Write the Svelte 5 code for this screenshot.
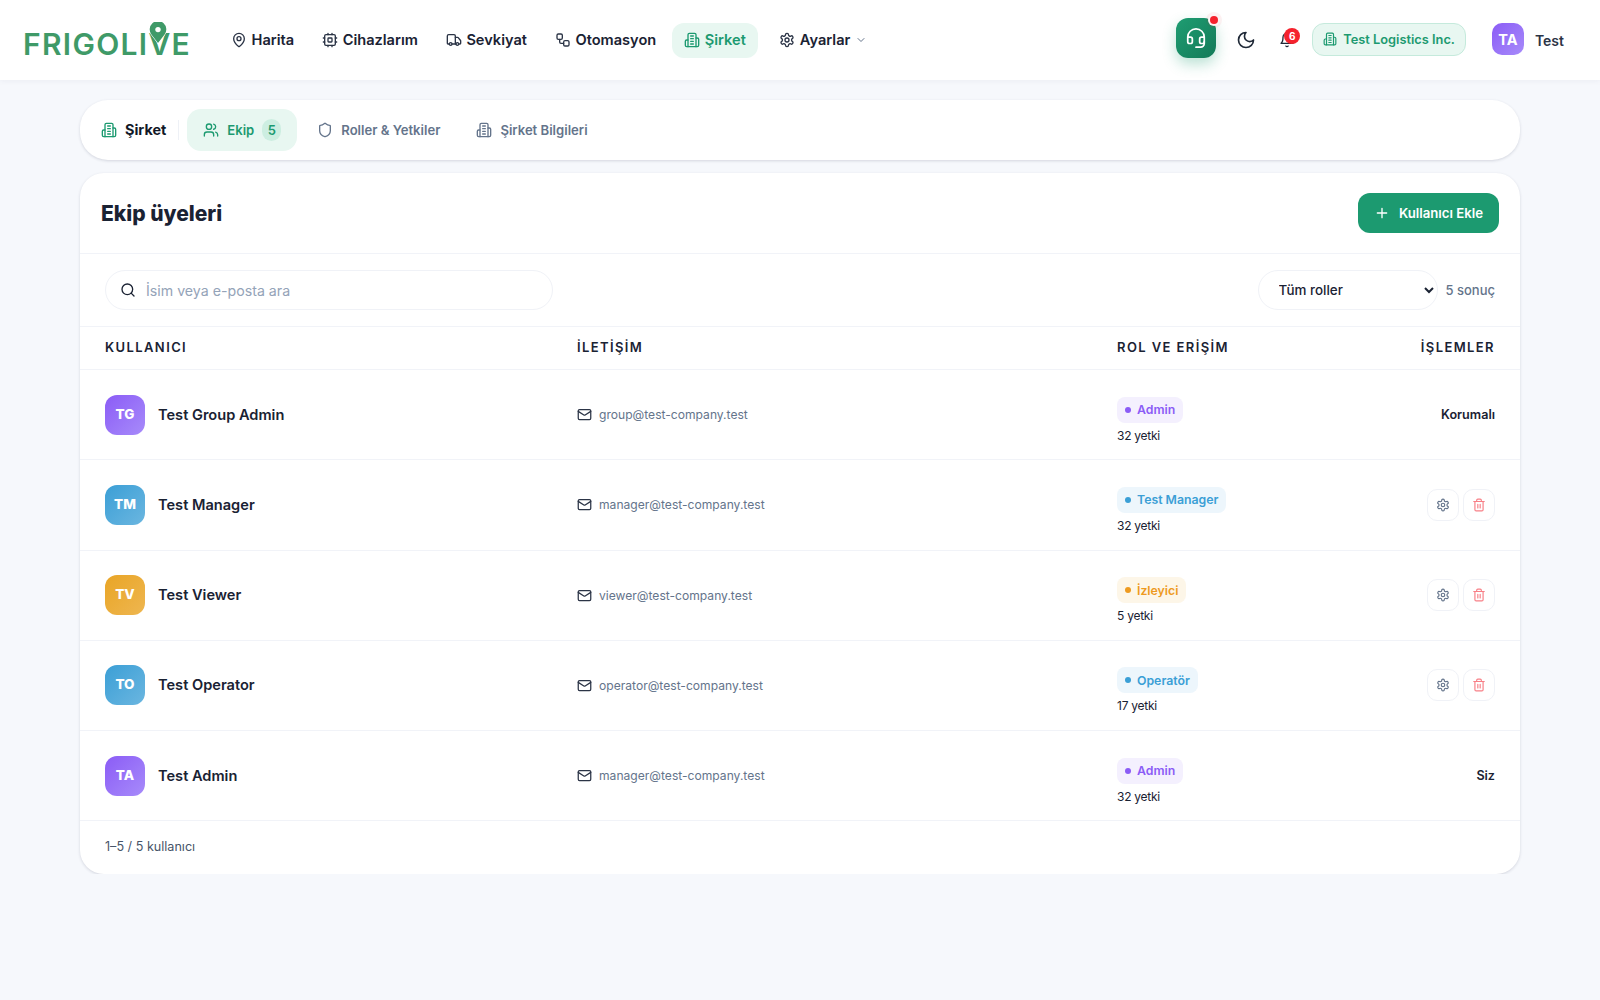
<script>
  const P = {
    pin: '<path d="M20 10c0 4.993-5.539 10.193-7.399 11.799a1 1 0 0 1-1.202 0C9.539 20.193 4 14.993 4 10a8 8 0 0 1 16 0"/><circle cx="12" cy="10" r="3"/>',
    cpu: '<rect x="4" y="4" width="16" height="16" rx="2"/><rect x="9" y="9" width="6" height="6" rx="1"/><path d="M15 2v2M15 20v2M2 15h2M2 9h2M20 15h2M20 9h2M9 2v2M9 20v2"/>',
    truck: '<path d="M14 18V6a2 2 0 0 0-2-2H4a2 2 0 0 0-2 2v11a1 1 0 0 0 1 1h2"/><path d="M15 18H9"/><path d="M19 18h2a1 1 0 0 0 1-1v-3.65a1 1 0 0 0-.22-.624l-3.48-4.35A1 1 0 0 0 17.52 8H14"/><circle cx="17" cy="18" r="2"/><circle cx="7" cy="18" r="2"/>',
    flow: '<rect width="8" height="8" x="3" y="3" rx="2"/><path d="M7 11v4a2 2 0 0 0 2 2h4"/><rect width="8" height="8" x="13" y="13" rx="2"/>',
    building: '<path d="M6 22V4a2 2 0 0 1 2-2h8a2 2 0 0 1 2 2v18Z"/><path d="M6 12H4a2 2 0 0 0-2 2v6a2 2 0 0 0 2 2h2"/><path d="M18 9h2a2 2 0 0 1 2 2v9a2 2 0 0 1-2 2h-2"/><path d="M10 6h4M10 10h4M10 14h4M10 18h4"/>',
    gear: '<path d="M12.22 2h-.44a2 2 0 0 0-2 2v.18a2 2 0 0 1-1 1.73l-.43.25a2 2 0 0 1-2 0l-.15-.08a2 2 0 0 0-2.73.73l-.22.38a2 2 0 0 0 .73 2.73l.15.1a2 2 0 0 1 1 1.72v.51a2 2 0 0 1-1 1.74l-.15.09a2 2 0 0 0-.73 2.73l.22.38a2 2 0 0 0 2.73.73l.15-.08a2 2 0 0 1 2 0l.43.25a2 2 0 0 1 1 1.73V20a2 2 0 0 0 2 2h.44a2 2 0 0 0 2-2v-.18a2 2 0 0 1 1-1.73l.43-.25a2 2 0 0 1 2 0l.15.08a2 2 0 0 0 2.73-.73l.22-.39a2 2 0 0 0-.73-2.73l-.15-.08a2 2 0 0 1-1-1.74v-.5a2 2 0 0 1 1-1.74l.15-.09a2 2 0 0 0 .73-2.73l-.22-.38a2 2 0 0 0-2.73-.73l-.15.08a2 2 0 0 1-2 0l-.43-.25a2 2 0 0 1-1-1.73V4a2 2 0 0 0-2-2z"/><circle cx="12" cy="12" r="3"/>',
    chevron: '<path d="m6 9 6 6 6-6"/>',
    headset: '<path d="M3 11h3a2 2 0 0 1 2 2v3a2 2 0 0 1-2 2H5a2 2 0 0 1-2-2v-5Zm0 0a9 9 0 1 1 18 0m0 0v5a2 2 0 0 1-2 2h-1a2 2 0 0 1-2-2v-3a2 2 0 0 1 2-2h3Z"/><path d="M21 16v2a4 4 0 0 1-4 4h-5"/>',
    moon: '<path d="M12 3a6 6 0 0 0 9 9 9 9 0 1 1-9-9Z"/>',
    bell: '<path d="M6 8a6 6 0 0 1 12 0c0 7 3 9 3 9H3s3-2 3-9"/><path d="M10.3 21a1.94 1.94 0 0 0 3.4 0"/>',
    users: '<path d="M16 21v-2a4 4 0 0 0-4-4H6a4 4 0 0 0-4 4v2"/><circle cx="9" cy="7" r="4"/><path d="M22 21v-2a4 4 0 0 0-3-3.87"/><path d="M16 3.13a4 4 0 0 1 0 7.75"/>',
    shield: '<path d="M20 13c0 5-3.5 7.5-7.66 8.95a1 1 0 0 1-.67-.01C7.5 20.5 4 18 4 13V6a1 1 0 0 1 1-1c2 0 4.5-1.2 6.24-2.72a1.17 1.17 0 0 1 1.52 0C14.51 3.81 17 5 19 5a1 1 0 0 1 1 1z"/>',
    mail: '<rect width="20" height="16" x="2" y="4" rx="2"/><path d="m22 7-8.97 5.7a1.94 1.94 0 0 1-2.06 0L2 7"/>',
    trash: '<path d="M3 6h18"/><path d="M19 6v14c0 1-1 2-2 2H7c-1 0-2-1-2-2V6"/><path d="M8 6V4c0-1 1-2 2-2h4c1 0 2 1 2 2v2"/><path d="M10 11v6M14 11v6"/>',
    search: '<circle cx="11" cy="11" r="8"/><path d="m21 21-4.3-4.3"/>',
    plus: '<path d="M5 12h14M12 5v14"/>'
  };

  const nav = [
    { label: 'Harita', icon: 'pin' },
    { label: 'Cihazlarım', icon: 'cpu' },
    { label: 'Sevkiyat', icon: 'truck' },
    { label: 'Otomasyon', icon: 'flow' },
    { label: 'Şirket', icon: 'building', active: true }
  ];

  const users = [
    { initials: 'TG', name: 'Test Group Admin', email: 'group@test-company.test', role: 'Admin', tone: 'purple', perms: 32, note: 'Korumalı' },
    { initials: 'TM', name: 'Test Manager', email: 'manager@test-company.test', role: 'Test Manager', tone: 'blue', perms: 32 },
    { initials: 'TV', name: 'Test Viewer', email: 'viewer@test-company.test', role: 'İzleyici', tone: 'orange', perms: 5 },
    { initials: 'TO', name: 'Test Operator', email: 'operator@test-company.test', role: 'Operatör', tone: 'blue', perms: 17 },
    { initials: 'TA', name: 'Test Admin', email: 'manager@test-company.test', role: 'Admin', tone: 'purple', perms: 32, note: 'Siz' }
  ];
</script>

{#snippet icon(name, size = 16, sw = 2)}
  <svg class="ic" width={size} height={size} viewBox="0 0 24 24" fill="none" stroke="currentColor" stroke-width={sw} stroke-linecap="round" stroke-linejoin="round">{@html P[name]}</svg>
{/snippet}

<header class="topbar">
  <div class="logo">
    <span class="wordmark">FRIGOLIVE</span>
    <svg class="logo-pin" width="20" height="24" viewBox="0 0 20 24">
      <path d="M10 21 L3.4 12.4 A8.3 8.3 0 1 1 16.6 12.4 Z" fill="#3f9a68" stroke="#fff" stroke-width="1.2" paint-order="stroke"/>
      <circle cx="10" cy="7.6" r="2.7" fill="#fff"/>
    </svg>
  </div>

  <nav class="nav">
    {#each nav as item}
      <span class="nav-item" class:active={item.active}>
        {@render icon(item.icon)}
        {item.label}
      </span>
    {/each}
    <span class="nav-item settings">
      {@render icon('gear')}
      Ayarlar
      <span class="chev">{@render icon('chevron', 12)}</span>
    </span>
  </nav>

  <div class="top-right">
    <button class="support">
      {@render icon('headset', 22, 1.9)}
      <span class="support-dot"></span>
    </button>
    <span class="round-btn moon">{@render icon('moon', 20)}</span>
    <span class="round-btn bell">
      {@render icon('bell', 16)}
      <span class="bell-badge">6</span>
    </span>
    <span class="company">{@render icon('building', 14)} Test Logistics Inc.</span>
    <span class="user">
      <span class="user-avatar">TA</span>
      <span class="user-name">Test</span>
    </span>
  </div>
</header>

<main class="page">
  <div class="tabs">
    <span class="tabs-label">
      <span class="green">{@render icon('building')}</span>
      Şirket
    </span>
    <span class="tabs-div"></span>
    <span class="tab active">
      {@render icon('users')}
      Ekip
      <span class="tab-count">5</span>
    </span>
    <span class="tab">{@render icon('shield')} Roller &amp; Yetkiler</span>
    <span class="tab">{@render icon('building')} Şirket Bilgileri</span>
  </div>

  <section class="card">
    <div class="card-head">
      <h1>Ekip üyeleri</h1>
      <button class="add">{@render icon('plus')} Kullanıcı Ekle</button>
    </div>

    <div class="toolbar">
      <label class="search">
        {@render icon('search')}
        <input type="text" placeholder="İsim veya e-posta ara" />
      </label>
      <div class="filter">
        <select><option>Tüm roller</option></select>
        <span class="count">5 sonuç</span>
      </div>
    </div>

    <div class="row thead">
      <span>KULLANICI</span>
      <span>İLETİŞİM</span>
      <span>ROL VE ERİŞİM</span>
      <span class="end">İŞLEMLER</span>
    </div>

    {#each users as u}
      <div class="row tr">
        <div class="who">
          <span class="avatar {u.initials}">{u.initials}</span>
          <span class="name">{u.name}</span>
        </div>
        <div class="mail">
          {@render icon('mail', 15)}
          <span>{u.email}</span>
        </div>
        <div class="role">
          <span class="badge {u.tone}"><i></i>{u.role}</span>
          <span class="perms">{u.perms} yetki</span>
        </div>
        <div class="end actions">
          {#if u.note}
            <span class="note">{u.note}</span>
          {:else}
            <button class="act">{@render icon('gear', 14)}</button>
            <button class="act del">{@render icon('trash', 14)}</button>
          {/if}
        </div>
      </div>
    {/each}

    <div class="foot">1–5 / 5 kullanıcı</div>
  </section>
</main>

<style>
  :global(body) {
    margin: 0;
    background: #f6f8fc;
    font-family: Inter, "Liberation Sans", sans-serif;
    color: #1a2233;
  }
  .ic { display: block; flex: none; }
  button { font: inherit; border: 0; padding: 0; cursor: pointer; }

  .topbar {
    height: 80px;
    box-sizing: border-box;
    background: #fff;
    display: flex;
    align-items: center;
    padding: 0 24px;
    box-shadow: 0 1px 6px rgba(30, 40, 70, 0.05);
  }
  .logo { position: relative; width: 195px; flex: none; height: 40px; display: flex; align-items: center; }
  .wordmark {
    font-size: 30px;
    font-weight: 600;
    letter-spacing: 1.3px;
    color: #3f9a68;
    line-height: 1;
    padding-top: 7px;
    margin-left: -1px;
  }
  .logo-pin { position: absolute; left: 124px; top: 2px; }

  .nav { display: flex; align-items: center; gap: 4px; }
  .nav-item {
    display: flex;
    align-items: center;
    gap: 4.5px;
    height: 35px;
    padding: 0 12px;
    border-radius: 12px;
    font-size: 14.6px;
    font-weight: 600;
    color: #1a2233;
  }
  .nav-item .ic { color: #2b3446; }
  .nav-item.active { background: #e8f7f1; color: #1c9a70; }
  .nav-item.active .ic { color: #1c9a70; }
  .settings { gap: 5px; margin-left: 5px; }
  .chev { color: #64748b; margin-left: 0; }
  .chev .ic { color: #64748b; }

  .top-right { margin-left: auto; display: flex; align-items: center; }
  .support {
    position: relative;
    width: 40px;
    height: 40px;
    margin-top: -4px;
    border-radius: 12px;
    background: linear-gradient(135deg, #1f9d72, #137a58);
    color: #fff;
    display: grid;
    place-items: center;
    box-shadow: 0 6px 14px rgba(28, 154, 112, 0.3);
  }
  .support-dot {
    position: absolute;
    top: -2px;
    right: -2px;
    width: 8px;
    height: 8px;
    border-radius: 50%;
    background: #f5222d;
    box-shadow: 0 0 0 4px rgba(245, 34, 45, 0.06), 0 0 0 2px #fff;
  }
  .round-btn { position: relative; width: 36px; height: 36px; display: grid; place-items: center; color: #1f2937; }
  .moon { margin-left: 12px; }
  .bell { margin-left: 5px; margin-right: 7px; color: #1f2937; }
  .bell-badge {
    position: absolute;
    top: 6px;
    right: 5px;
    min-width: 16px;
    height: 16px;
    border-radius: 8px;
    background: #f5222d;
    color: #fff;
    font-size: 10px;
    font-weight: 700;
    display: grid;
    place-items: center;
  }
  .company {
    display: flex;
    align-items: center;
    gap: 6px;
    height: 33px;
    margin-top: -2px;
    box-sizing: border-box;
    padding: 0 10px;
    border: 1px solid #c5eadc;
    border-radius: 12px;
    background: #e8f7f1;
    color: #1c9a70;
    font-size: 12.8px;
    font-weight: 600;
  }
  .user { display: flex; align-items: center; gap: 11px; margin-left: 26px; padding-right: 12px; }
  .user-avatar {
    width: 32px;
    height: 32px;
    margin-top: -2px;
    border-radius: 10px;
    background: linear-gradient(135deg, #8b5cf6, #a78bfa);
    color: #fff;
    font-size: 14.5px;
    font-weight: 700;
    display: grid;
    place-items: center;
  }
  .user-name { font-size: 14px; font-weight: 600; color: #2b3446; }

  .page { width: 1440px; margin: 20px auto 0; display: flex; flex-direction: column; gap: 13px; }

  .tabs {
    height: 60px;
    box-sizing: border-box;
    background: #fff;
    border-radius: 28px;
    display: flex;
    align-items: center;
    padding: 0 21px;
    box-shadow: 0 1px 3px rgba(30, 40, 70, 0.16);
  }
  .tabs-label { display: flex; align-items: center; gap: 8px; padding-bottom: 1px; font-size: 14.4px; font-weight: 700; color: #111827; }
  .green { color: #1c9a70; }
  .tabs-div { width: 1px; height: 20px; background: #eef1f6; margin: 0 8px 0 12px; }
  .tab {
    display: flex;
    align-items: center;
    gap: 8px;
    height: 42px;
    padding: 0 16px;
    margin-right: 4px;
    border-radius: 14px;
    font-size: 13.1px;
    font-weight: 600;
    color: #64748b;
  }
  .tab.active { background: #e8f7f1; color: #1c9a70; }
  .tab-count {
    width: 19px;
    height: 22px;
    border-radius: 11px;
    background: #cdeee1;
    display: grid;
    place-items: center;
    font-size: 13px;
  }

  .card {
    background: #fff;
    border-radius: 24px;
    box-shadow: 0 1px 3px rgba(30, 40, 70, 0.16);
    display: flex;
    flex-direction: column;
  }
  .card-head {
    height: 81px;
    box-sizing: border-box;
    display: flex;
    align-items: center;
    justify-content: space-between;
    padding: 0 21px;
    border-bottom: 1px solid #f1f3f8;
  }
  h1 { margin: 0; font-size: 21px; font-weight: 800; color: #1a2233; }
  .add {
    display: flex;
    align-items: center;
    gap: 9px;
    height: 40px;
    padding: 0 16px 1px;
    border-radius: 12px;
    background: #1c9a70;
    color: #fff;
    font-size: 13.2px;
    font-weight: 600;
  }

  .toolbar {
    height: 73px;
    box-sizing: border-box;
    display: flex;
    align-items: center;
    justify-content: space-between;
    padding: 0 25px;
    border-bottom: 1px solid #f1f3f8;
  }
  .search {
    width: 448px;
    height: 40px;
    box-sizing: border-box;
    display: flex;
    align-items: center;
    gap: 10px;
    padding: 0 14px;
    border: 1px solid #f0f2f7;
    border-radius: 20px;
  }
  .search input {
    flex: 1;
    border: 0;
    outline: 0;
    font: inherit;
    font-size: 14.2px;
    color: #1a2233;
    background: transparent;
    padding: 0;
  }
  .search input::placeholder { color: #94a3b8; }
  .filter { display: flex; align-items: center; gap: 8px; }
  select {
    width: 180px;
    height: 40px;
    box-sizing: border-box;
    padding: 0 6px 0 16px;
    border: 1px solid #f0f2f7;
    border-radius: 20px;
    background: #fff;
    font: inherit;
    font-size: 13.4px;
    font-weight: 500;
    color: #1a2233;
    outline: 0;
  }
  .count { font-size: 13px; font-weight: 500; color: #64748b; }

  .row {
    display: grid;
    grid-template-columns: 472px 540px 1fr auto;
    align-items: center;
    padding: 0 25px;
    border-bottom: 1px solid #f1f3f8;
  }
  .thead {
    height: 43px;
    box-sizing: border-box;
    padding-bottom: 2px;
    font-size: 13px;
    font-weight: 600;
    letter-spacing: 1.4px;
    color: #1a2233;
  }
  .tr { height: 90.25px; box-sizing: border-box; }
  .end { justify-self: end; }

  .who { display: flex; align-items: center; gap: 13px; }
  .avatar {
    width: 40px;
    height: 40px;
    border-radius: 12px;
    display: grid;
    place-items: center;
    color: #fff;
    font-size: 13.5px;
    font-weight: 800;
    padding-bottom: 2px;
    box-sizing: border-box;
  }
  .TG, .TA { background: linear-gradient(135deg, #8b5cf6, #a78bfa); }
  .TM, .TO { background: linear-gradient(135deg, #3b9fd6, #6bb6e0); }
  .TV { background: linear-gradient(135deg, #e9a526, #eeb650); }
  .name { font-size: 14.6px; font-weight: 600; color: #1a2233; }

  .mail { display: flex; align-items: center; gap: 7px; color: #2b3446; }
  .mail span { font-size: 12.1px; color: #64748b; }

  .role { display: flex; flex-direction: column; align-items: flex-start; gap: 4px; padding-top: 12px; }
  .badge {
    display: inline-flex;
    align-items: center;
    gap: 6px;
    height: 26px;
    padding: 0 8px;
    border-radius: 8px;
    font-size: 12.3px;
    font-weight: 600;
  }
  .badge i { width: 6px; height: 6px; border-radius: 50%; background: currentColor; }
  .purple { background: #f4f0fe; color: #8b5cf6; }
  .blue { background: #edf6fc; color: #3b9fd6; }
  .orange { background: #fdf6e8; color: #ee9a1f; }
  .perms { font-size: 12px; letter-spacing: -0.25px; color: #1a2233; line-height: 18px; }

  .actions { display: flex; align-items: center; gap: 4px; }
  .note { font-size: 12.6px; font-weight: 600; color: #1a2233; }
  .act {
    width: 32px;
    height: 32px;
    border: 1px solid #f0f2f7;
    border-radius: 10px;
    background: #fff;
    color: #64748b;
    display: grid;
    place-items: center;
  }
  .del { color: #f87f86; }

  .foot { height: 53px; box-sizing: border-box; display: flex; align-items: center; padding: 0 25px 2px; font-size: 12.6px; color: #475569; }
</style>
